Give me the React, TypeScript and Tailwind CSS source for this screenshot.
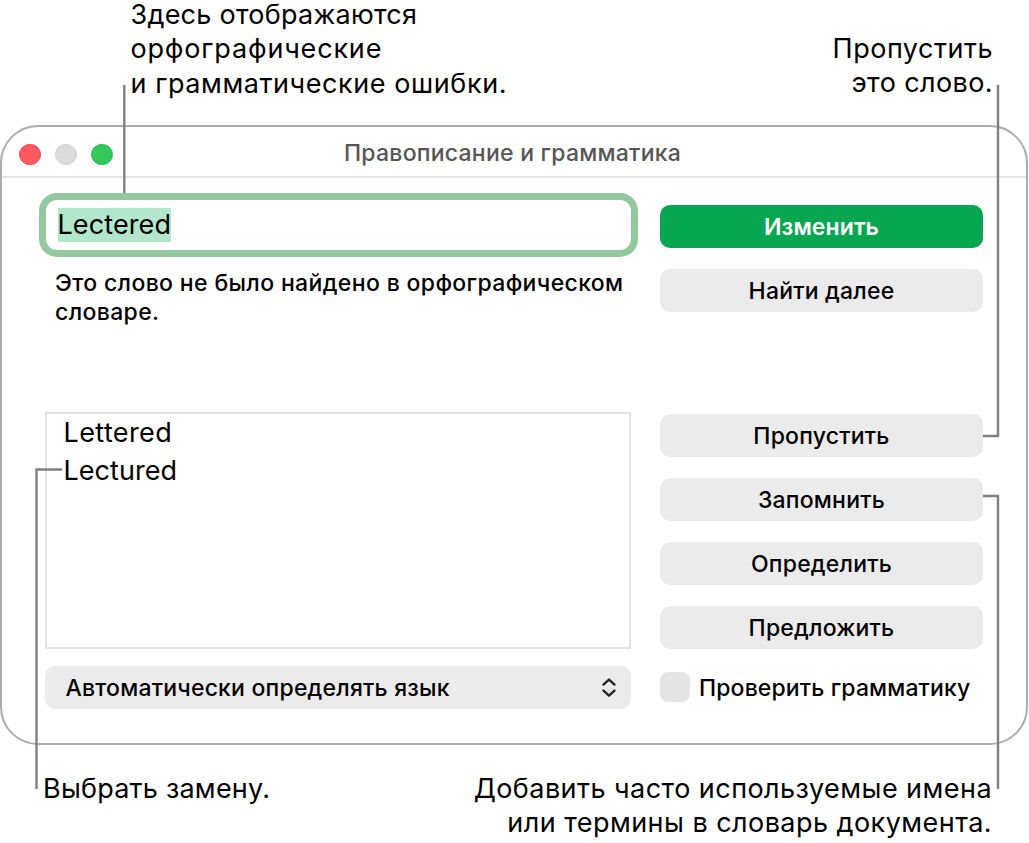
import React, { useState } from "react";

const suggestions = ["Lettered", "Lectured"];

const actions = [
  { id: "ignore", title: "Пропустить" },
  { id: "learn", title: "Запомнить" },
  { id: "define", title: "Определить" },
  { id: "guess", title: "Предложить" },
];

function PushButton({
  children,
  primary = false,
  className = "",
}: {
  children: React.ReactNode;
  primary?: boolean;
  className?: string;
}) {
  return (
    <button
      className={`flex h-[43px] w-full items-center justify-center rounded-[10px] pt-[2px] text-[23px] ${
        primary
          ? "bg-[#07a650] font-semibold tracking-[0.1px] text-white"
          : "bg-[#ebebeb] font-medium tracking-[0.2px] text-black"
      } ${className}`}>
      <span>{children}</span>
    </button>
  );
}

function CalloutLines() {
  return (
    <svg
      className="pointer-events-none absolute inset-0"
      width="1029"
      height="843"
      fill="none"
      stroke="#808080"
      strokeWidth="2.4">
      <path d="M124.3 85V193" />
      <path d="M998 85V436H983" />
      <path d="M62 469.5H36.5V789" />
      <path d="M983 496H998V789" />
    </svg>
  );
}

export default function App() {
  const [checked, setChecked] = useState(false);

  return (
    <div className="relative flex h-[843px] w-[1029px] flex-col bg-white font-['Inter',sans-serif] text-black">
      {/* Top captions */}
      <div className="flex h-[125px] shrink-0 justify-between pr-[36px] pl-[130.5px] text-[27px] leading-[34.6px] whitespace-nowrap">
        <p className="-mt-[2.5px]">
          <span className="block tracking-[0.25px]">Здесь отображаются</span>
          <span className="block tracking-[0.82px]">орфографические</span>
          <span className="block tracking-[0.57px]">и грамматические ошибки.</span>
        </p>
        <p className="mt-[31.5px] text-right">
          <span className="block tracking-[0.5px]">Пропустить</span>
          <span className="block tracking-[0.4px]">это слово.</span>
        </p>
      </div>

      {/* Spelling and grammar window */}
      <div className="flex h-[620px] w-[1028px] shrink-0 flex-col rounded-[38px] border-2 border-[#abacae]">
        <div className="flex h-[51px] shrink-0 items-center border-b-2 border-[#e6e6e6] pl-[17px]">
          <div className="flex w-[95px] gap-[14.5px] pt-[6px]">
            <span className="size-[21.5px] rounded-full border border-[#fb4048] bg-[#ff5a5f]" />
            <span className="size-[21.5px] rounded-full border border-[#d2d2d2] bg-[#dcdcdc]" />
            <span className="size-[21.5px] rounded-full border border-[#1fb943] bg-[#34c85a]" />
          </div>
          <h1 className="ml-[230px] pt-[4px] text-[23px] font-medium tracking-[0.24px] whitespace-nowrap text-[#555555]">
            Правописание и грамматика
          </h1>
        </div>

        <div className="flex pt-[15px] pl-[36.5px]">
          {/* Word and suggestions */}
          <div className="flex w-[599px] flex-col">
            <div className="flex h-[64px] items-center rounded-[18px] border-[7px] border-[#93c79d] pl-[12px]">
              <span className="bg-[#b2e7cc] text-[27px] leading-[34px] tracking-[0.1px]">Lectered</span>
            </div>
            <p className="mt-[12px] h-[143px] pl-[16.5px] text-[23px] leading-[28.5px] font-medium tracking-[0.36px] whitespace-nowrap">
              Это слово не было найдено в орфографическом
              <br />
              словаре.
            </p>
            <ul className="ml-[6px] h-[237px] w-[586px] border-2 border-[#e2e2e2] pl-[17px] text-[27px] leading-[38px]">
              {suggestions.map((word) => (
                <li key={word} className="tracking-[0.05px] first:tracking-[0.4px]">
                  {word}
                </li>
              ))}
            </ul>
            <button className="mt-[17px] ml-[6px] flex h-[43px] w-[586px] items-center justify-between rounded-[10px] bg-[#ebebeb] pr-[14px] pl-[21px] text-[23px] font-medium tracking-[0.2px]">
              <span className="pt-[2px]">Автоматически определять язык</span>
              <svg width="16" height="20" viewBox="0 0 16 20" fill="none" stroke="#262626" strokeWidth="2.4" strokeLinecap="round" strokeLinejoin="round">
                <path d="M2.5 6.6L8 1.6L13.5 6.6" />
                <path d="M2.5 12.6L8 17.6L13.5 12.6" />
              </svg>
            </button>
          </div>

          {/* Buttons */}
          <div className="ml-[22.5px] flex w-[323px] flex-col pt-[12px]">
            <PushButton primary>Изменить</PushButton>
            <PushButton className="mt-[21px]">Найти далее</PushButton>
            <div className="mt-[102px] flex flex-col gap-[21px]">
              {actions.map((action) => (
                <PushButton key={action.id}>{action.title}</PushButton>
              ))}
            </div>
            <label className="mt-[23px] flex items-center gap-[9px] text-[23px] leading-[30px] font-medium tracking-[0.13px] whitespace-nowrap">
              <input
                type="checkbox"
                checked={checked}
                onChange={() => setChecked(!checked)}
                className="size-[30px] shrink-0 appearance-none rounded-[8px] bg-[#e4e4e4]"
              />
              <span className="relative top-px">Проверить грамматику</span>
            </label>
          </div>
        </div>
      </div>

      {/* Bottom captions */}
      <div className="flex justify-between pt-[26.5px] pr-[37px] pl-[43px] text-[27px] leading-[34.6px] whitespace-nowrap">
        <p className="tracking-[0.22px]">Выбрать замену.</p>
        <p className="text-right tracking-[0.45px]">
          Добавить часто используемые имена
          <br />
          или термины в словарь документа.
        </p>
      </div>

      <CalloutLines />
    </div>
  );
}
